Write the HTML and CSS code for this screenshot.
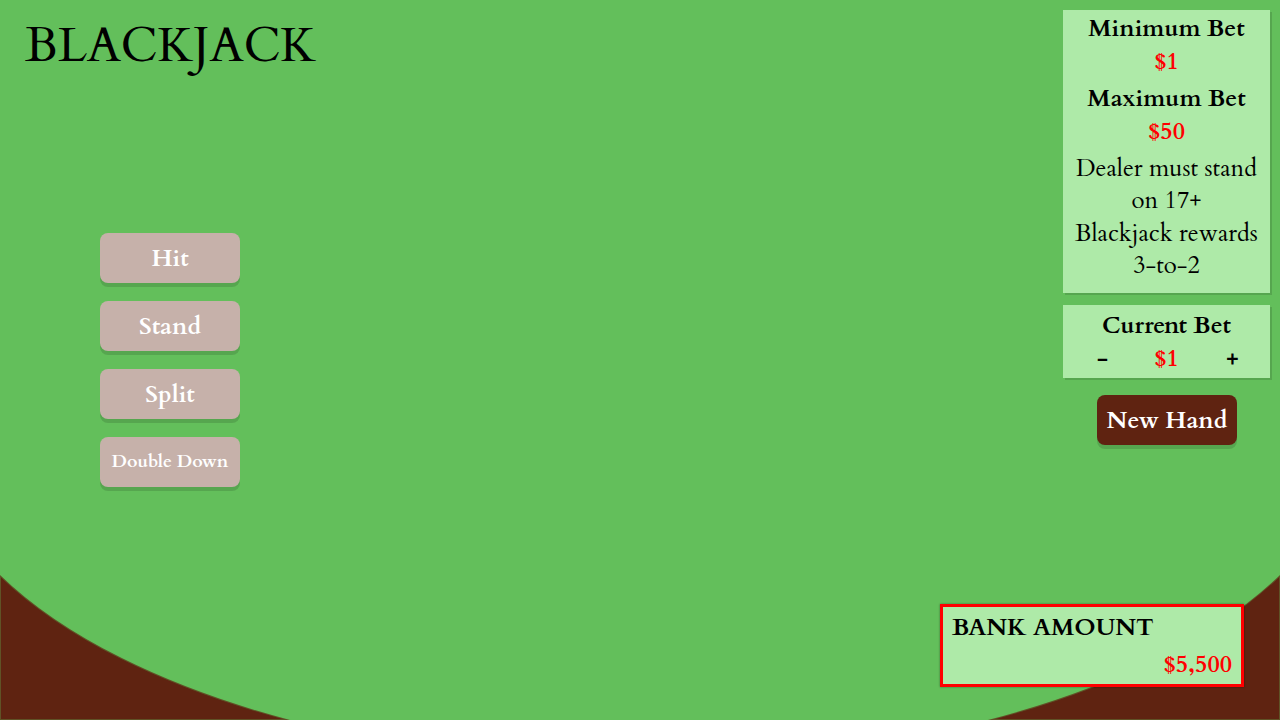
FILE: index.html
```html
<!DOCTYPE html>
<html lang="en">
<head>
<meta charset="utf-8">
<title>Blackjack</title>
<link rel="stylesheet" href="styles.css">
</head>
<body>
<svg class="table-edge" viewBox="0 0 1280 720" preserveAspectRatio="none" aria-hidden="true">
  <path d="M0 575A710 332 0 0 0 290 720H0Z"/>
  <path d="M1280 575A710 332 0 0 1 988 720H1280Z"/>
</svg>
<div class="game">
  <section class="play">
    <h1 class="title">BLACKJACK</h1>
    <div class="actions">
      <button class="btn" disabled>Hit</button>
      <button class="btn" disabled>Stand</button>
      <button class="btn" disabled>Split</button>
      <button class="btn btn-small" disabled>Double Down</button>
    </div>
  </section>
  <aside class="side">
    <section class="panel rules">
      <h2 class="label">Minimum Bet</h2>
      <p class="money">$1</p>
      <h2 class="label">Maximum Bet</h2>
      <p class="money">$50</p>
      <p class="rule">Dealer must stand on 17+</p>
      <p class="rule">Blackjack rewards 3-to-2</p>
    </section>
    <section class="panel bet">
      <h2 class="label">Current Bet</h2>
      <div class="stepper">
        <button class="step" aria-label="Decrease bet">-</button>
        <span class="money">$1</span>
        <button class="step" aria-label="Increase bet">+</button>
      </div>
    </section>
    <button class="btn">New Hand</button>
    <section class="bank">
      <h2 class="label">BANK AMOUNT</h2>
      <p class="money">$5,500</p>
    </section>
  </aside>
</div>
</body>
</html>
```

FILE: styles.css
```css
* {
  box-sizing: border-box;
}

body {
  margin: 0;
  background: #63bf5b;
  color: #000;
  font-family: Cardo, "Liberation Serif", serif;
  font-size: 24px;
}

h1, h2, p {
  margin: 0;
}

.table-edge {
  position: absolute;
  inset: 0;
  width: 100%;
  height: 100%;
  fill: #5f2311;
  stroke: rgba(99, 191, 91, 0.3);
  stroke-width: 2px;
}

.game {
  position: relative;
  display: flex;
  justify-content: space-between;
  min-height: 100vh;
}

.title {
  padding: 18px 0 0 25px;
  font-size: 48px;
  font-weight: 400;
  line-height: 56px;
}

.actions {
  display: flex;
  flex-direction: column;
  gap: 18px;
  padding: 159px 0 0 100px;
}

.btn {
  width: 140px;
  height: 50px;
  padding: 0;
  border: 0;
  border-radius: 8px;
  background: #5f2311;
  box-shadow: 0 4px 0 rgba(0, 0, 0, 0.13);
  color: #fff;
  font: bold 24px Cardo, "Liberation Serif", serif;
  cursor: pointer;
}

.btn:disabled {
  background: #c6b1aa;
  cursor: default;
}

.btn-small {
  padding-bottom: 2px;
  font-size: 18px;
}

.side {
  display: flex;
  flex-direction: column;
  align-items: flex-end;
  padding: 10px 10px 33px 0;
}

.side > .btn {
  margin: 17px 33px 0 0;
}

.panel {
  width: 207px;
  background: #aeeaa8;
  box-shadow: 2px 2px 0 rgba(0, 0, 0, 0.13);
  text-align: center;
}

.label {
  font-size: 24px;
  line-height: 37px;
}

.money {
  color: #f00;
  font-weight: bold;
  line-height: 30px;
}

.rules {
  padding: 0 10px 11px;
}

.rules .money {
  padding-bottom: 3px;
}

.rule {
  margin-top: 1px;
  line-height: 32px;
}

.money + .rule {
  margin-top: 3px;
}

.bet {
  margin-top: 12px;
  padding: 2px 0 4px;
}

.stepper {
  display: grid;
  grid-template-columns: repeat(3, 1fr);
  padding: 0 6px;
}

.step {
  padding: 0 0 0 2px;
  border: 0;
  background: none;
  color: #000;
  font: bold 24px Cardo, "Liberation Serif", serif;
  line-height: 30px;
  cursor: pointer;
}

.bank {
  width: 304px;
  margin: auto 26px 0 0;
  padding: 2px 9px 1px;
  border: 3px solid #f00;
  background: #aeeaa8;
  box-shadow: 0 0 2px rgba(0, 0, 0, 0.4);
}

.bank .money {
  line-height: 37px;
  text-align: right;
}
```
